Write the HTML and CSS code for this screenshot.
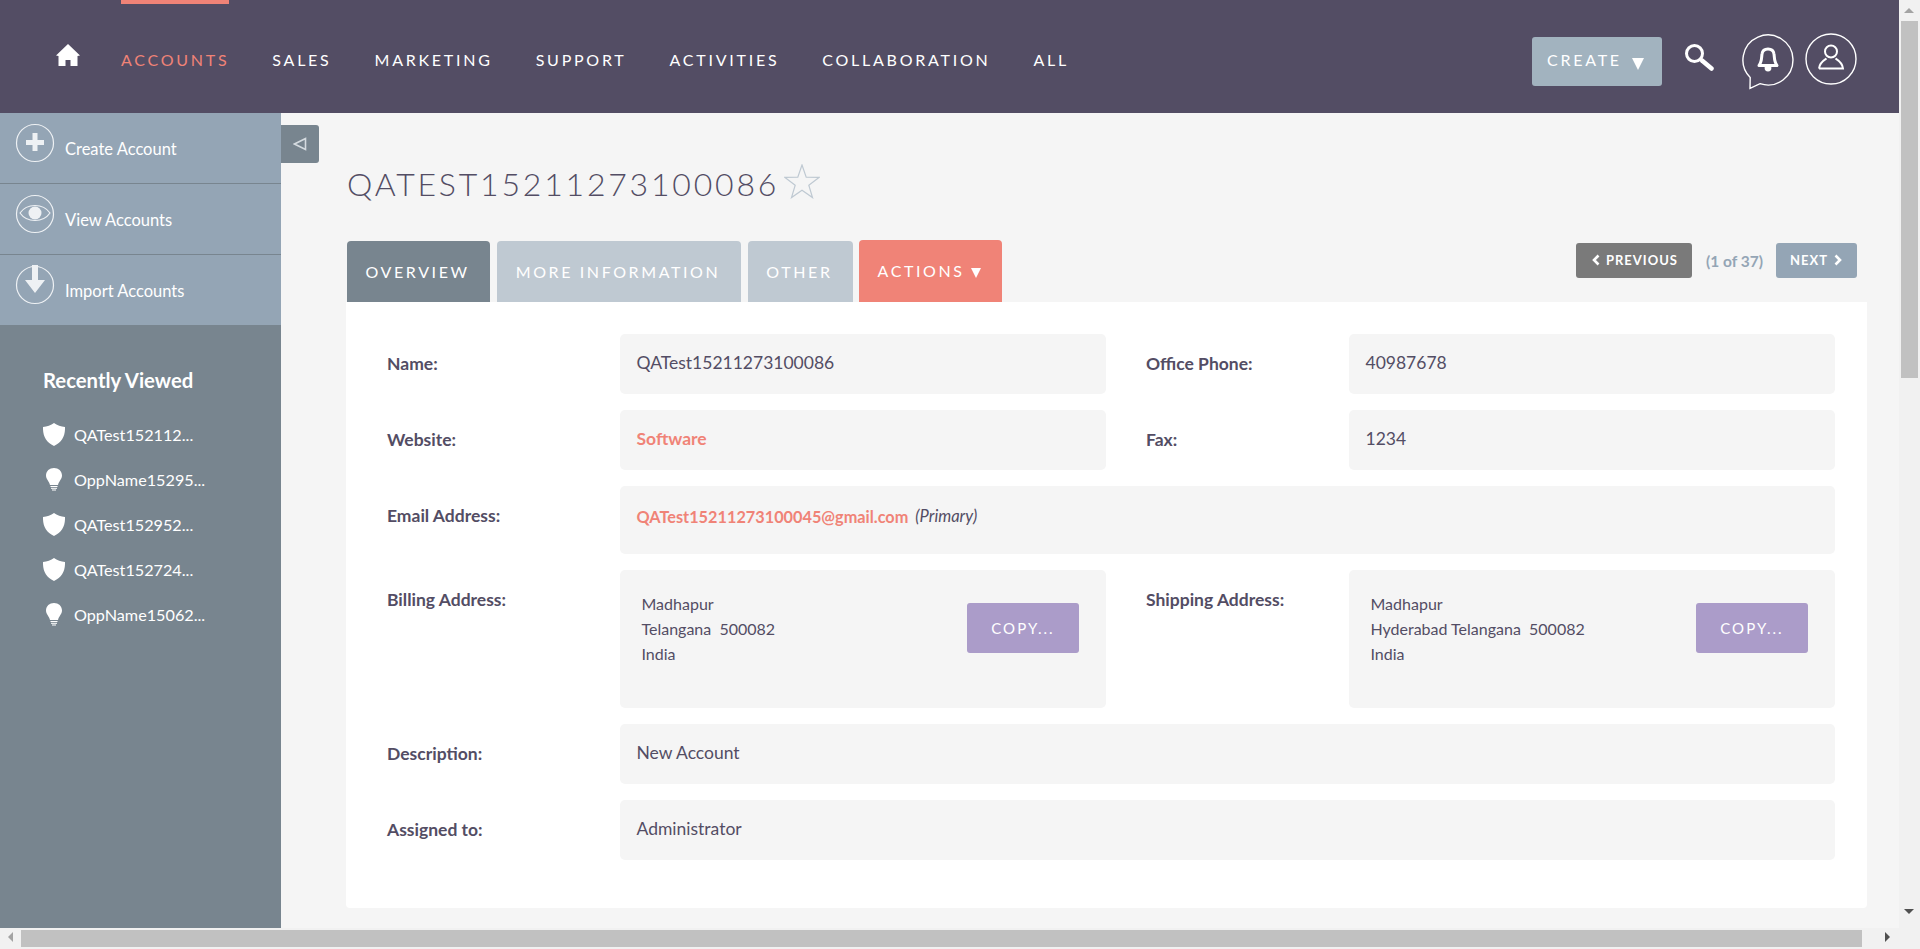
FILE: index.html

```html
<!DOCTYPE html>
<html>

<head>
    <meta charset="utf-8">
    <title>QATest15211273100086</title>
    <link rel="stylesheet" href="styles.css">
</head>

<body>
    <div class="window">
        <div class="page">
            <header class="navbar">
                <a class="nav-home" href="#">
                    <svg width="24" height="23" viewBox="0 0 24 23"><path d="M12 0 L24 11.5 L21.5 12 L21.5 22 L14.5 22 L14.5 16 L9.5 16 L9.5 22 L2.5 22 L2.5 12 L0 11.5 Z" fill="#fff"/></svg>
                </a>
                <nav class="nav-menu">
                    <a class="nav-item active" href="#">ACCOUNTS</a>
                    <a class="nav-item" href="#">SALES</a>
                    <a class="nav-item" href="#">MARKETING</a>
                    <a class="nav-item" href="#">SUPPORT</a>
                    <a class="nav-item" href="#">ACTIVITIES</a>
                    <a class="nav-item" href="#">COLLABORATION</a>
                    <a class="nav-item" href="#">ALL</a>
                </nav>
                <div class="nav-tools">
                    <button class="create-btn">CREATE<span class="create-caret"></span></button>
                    <svg class="search-icon" width="30" height="30" viewBox="0 0 30 30">
                        <circle cx="10.5" cy="10.5" r="8" fill="none" stroke="#fff" stroke-width="3"/>
                        <path d="M18 17.5 L27.5 25.5" stroke="#fff" stroke-width="4.5" stroke-linecap="round"/>
                    </svg>
                    <svg class="bell-icon" width="54" height="62" viewBox="0 0 54 62">
                        <path d="M19 50.7 A25 25 0 1 0 9.2 44.6 L9 55.5 Z" fill="none" stroke="#fff" stroke-width="1.4"/>
                        <path d="M18 32.5 C21 29 20.5 24 21 21 C21.5 17.5 24 16 27 16 C30 16 32.5 17.5 33 21 C33.5 24 33 29 36 32.5 Z" fill="none" stroke="#fff" stroke-width="3" stroke-linejoin="round"/>
                        <circle cx="27" cy="35" r="3.4" fill="#fff"/>
                    </svg>
                    <svg class="user-icon" width="52" height="52" viewBox="0 0 52 52">
                        <circle cx="26" cy="26" r="25" fill="none" stroke="#fff" stroke-width="1.4"/>
                        <circle cx="26" cy="18.5" r="6" fill="none" stroke="#fff" stroke-width="2"/>
                        <path d="M14 35.5 H38 C37.5 30 33.5 27.5 30.5 25.5 M14 35.5 C14.5 30 18.5 27.5 21.5 25.5" fill="none" stroke="#fff" stroke-width="2"/>
                    </svg>
                </div>
            </header>

            <div class="content-wrap">
                <aside class="sidebar">
                    <ul class="action-list">
                        <li class="action-item">
                            <svg class="action-icon" width="40" height="40" viewBox="0 0 40 40">
                                <circle cx="20" cy="20" r="18.5" fill="none" stroke="#eef1f4" stroke-width="1.2"/>
                                <path d="M20 10 V28 M11 19.5 H29" stroke="#eef1f4" stroke-width="5"/>
                            </svg>
                            <span>Create Account</span>
                        </li>
                        <li class="action-item">
                            <svg class="action-icon" width="40" height="40" viewBox="0 0 40 40">
                                <circle cx="20" cy="20" r="18.5" fill="none" stroke="#eef1f4" stroke-width="1.2"/>
                                <path d="M5 19 C12 9 28 9 35 19 C28 29 12 29 5 19 Z" fill="none" stroke="#eef1f4" stroke-width="1.2"/>
                                <circle cx="20" cy="19" r="6.5" fill="#eef1f4"/>
                            </svg>
                            <span>View Accounts</span>
                        </li>
                        <li class="action-item">
                            <svg class="action-icon" width="40" height="40" viewBox="0 0 40 40">
                                <circle cx="20" cy="20" r="18.5" fill="none" stroke="#eef1f4" stroke-width="1.2"/>
                                <path d="M17 0 H23 V15 H30 L20 28 L10 15 H17 Z" fill="#eef1f4"/>
                            </svg>
                            <span>Import Accounts</span>
                        </li>
                    </ul>
                    <div class="recent">
                        <h2 class="recent-title">Recently Viewed</h2>
                        <ul class="recent-list">
                            <li class="recent-item">
                                <span class="recent-icon"><svg width="22" height="23" viewBox="0 0 22 23"><path d="M11 0 C14 2.5 18 3.5 22 4 C22.3 13 19 19 11 23 C3 19 -0.3 13 0 4 C4 3.5 8 2.5 11 0 Z" fill="#fff"/></svg></span>
                                QATest152112...
                            </li>
                            <li class="recent-item">
                                <span class="recent-icon"><svg width="16" height="23" viewBox="0 0 16 23"><path d="M8 0 C12.5 0 16 3 16 7.5 C16 11 13 13 12 17 H4 C3 13 0 11 0 7.5 C0 3 3.5 0 8 0 Z" fill="#fff"/><path d="M4.5 18.5 H11.5 M5 20.3 H11 M6 22 H10" stroke="#fff" stroke-width="1"/></svg></span>
                                OppName15295...
                            </li>
                            <li class="recent-item">
                                <span class="recent-icon"><svg width="22" height="23" viewBox="0 0 22 23"><path d="M11 0 C14 2.5 18 3.5 22 4 C22.3 13 19 19 11 23 C3 19 -0.3 13 0 4 C4 3.5 8 2.5 11 0 Z" fill="#fff"/></svg></span>
                                QATest152952...
                            </li>
                            <li class="recent-item">
                                <span class="recent-icon"><svg width="22" height="23" viewBox="0 0 22 23"><path d="M11 0 C14 2.5 18 3.5 22 4 C22.3 13 19 19 11 23 C3 19 -0.3 13 0 4 C4 3.5 8 2.5 11 0 Z" fill="#fff"/></svg></span>
                                QATest152724...
                            </li>
                            <li class="recent-item">
                                <span class="recent-icon"><svg width="16" height="23" viewBox="0 0 16 23"><path d="M8 0 C12.5 0 16 3 16 7.5 C16 11 13 13 12 17 H4 C3 13 0 11 0 7.5 C0 3 3.5 0 8 0 Z" fill="#fff"/><path d="M4.5 18.5 H11.5 M5 20.3 H11 M6 22 H10" stroke="#fff" stroke-width="1"/></svg></span>
                                OppName15062...
                            </li>
                        </ul>
                    </div>
                </aside>

                <main class="main">
                    <a class="side-toggle" href="#">
                        <svg width="14" height="14" viewBox="0 0 14 14"><path d="M12.5 1.5 V12.5 L1.5 7 Z" fill="none" stroke="#d5dbe0" stroke-width="1.6"/></svg>
                    </a>

                    <div class="title-row">
                        <h1 class="page-title">QATEST15211273100086</h1>
                        <svg class="fav-star" width="36" height="35" viewBox="0 0 36 35"><path d="M18 1 L22.2 13.2 L35 13.4 L24.8 21.2 L28.5 33.6 L18 26.2 L7.5 33.6 L11.2 21.2 L1 13.4 L13.8 13.2 Z" fill="none" stroke="#bfc9d2" stroke-width="1.2"/></svg>
                    </div>

                    <div class="tab-row">
                        <a class="tab tab-active" href="#">OVERVIEW</a>
                        <a class="tab" href="#">MORE INFORMATION</a>
                        <a class="tab" href="#">OTHER</a>
                        <a class="tab tab-actions" href="#">ACTIONS <span class="tab-caret"></span></a>
                        <div class="pager">
                            <a class="pager-btn pager-prev" href="#">
                                <svg width="10" height="12" viewBox="0 0 10 12"><path d="M7.5 1.5 L3 6 L7.5 10.5" fill="none" stroke="#fff" stroke-width="2.6"/></svg>
                                PREVIOUS
                            </a>
                            <span class="pager-count">(1 of 37)</span>
                            <a class="pager-btn pager-next" href="#">
                                NEXT
                                <svg width="10" height="12" viewBox="0 0 10 12"><path d="M2.5 1.5 L7 6 L2.5 10.5" fill="none" stroke="#fff" stroke-width="2.6"/></svg>
                            </a>
                        </div>
                    </div>

                    <section class="panel">
                        <div class="detail-grid">
                            <div class="label">Name:</div>
                            <div class="field">QATest15211273100086</div>
                            <div class="label label-right">Office Phone:</div>
                            <div class="field">40987678</div>

                            <div class="label">Website:</div>
                            <div class="field"><a class="link" href="#">Software</a></div>
                            <div class="label label-right">Fax:</div>
                            <div class="field">1234</div>

                            <div class="label">Email Address:</div>
                            <div class="field field-wide field-email"><a class="link email-link" href="#">QATest15211273100045@gmail.com</a> <em class="email-note">(Primary)</em></div>

                            <div class="label">Billing Address:</div>
                            <div class="field field-address">
                                <div class="address">Madhapur<br>Telangana&nbsp; 500082<br>India</div>
                                <button class="copy-btn">COPY...</button>
                            </div>
                            <div class="label label-right">Shipping Address:</div>
                            <div class="field field-address">
                                <div class="address">Madhapur<br>Hyderabad Telangana&nbsp; 500082<br>India</div>
                                <button class="copy-btn">COPY...</button>
                            </div>

                            <div class="label">Description:</div>
                            <div class="field field-wide">New Account</div>

                            <div class="label">Assigned to:</div>
                            <div class="field field-wide">Administrator</div>
                        </div>
                    </section>
                </main>
            </div>
        </div>

        <div class="vbar">
            <span class="arrow arrow-up"></span>
            <div class="vbar-thumb"></div>
            <span class="arrow arrow-down"></span>
        </div>
        <div class="hbar">
            <span class="arrow arrow-left"></span>
            <div class="hbar-thumb"></div>
            <span class="arrow arrow-right"></span>
        </div>
        <div class="corner"></div>
    </div>
</body>

</html>
```

FILE: styles.css

```css
* {
    box-sizing: border-box;
}

html, body {
    height: 100%;
    margin: 0;
    overflow: hidden;
}

body {
    background: #f5f5f5;
    color: #534d64;
    font-family: "Lato", "Open Sans", sans-serif;
    font-size: 17.5px;
}

a {
    text-decoration: none;
    color: inherit;
}

ul {
    list-style: none;
    margin: 0;
    padding: 0;
}

button {
    border: 0;
    font-family: inherit;
    color: #fff;
}

.window {
    display: grid;
    grid-template-columns: 1fr 21px;
    grid-template-rows: 1fr 21px;
    height: 100%;
}

.page {
    display: flex;
    flex-direction: column;
    min-height: 0;
    overflow: hidden;
}

/* top bar */
.navbar {
    display: flex;
    align-items: stretch;
    flex: none;
    height: 113px;
    background: #534d64;
    color: #fff;
}

.nav-home {
    margin: 44px 0 0 56px;
    width: 65px;
}

.nav-menu {
    display: flex;
    gap: 43px;
}

.nav-item {
    border-top: 4px solid transparent;
    height: 100%;
    line-height: 112px;
    font-size: 16px;
    letter-spacing: 2.75px;
}

.nav-item.active {
    border-top-color: #f08377;
    color: #f08377;
}

.nav-tools {
    display: flex;
    align-items: flex-start;
    margin-left: auto;
    padding-right: 42px;
}

.create-btn {
    display: flex;
    align-items: center;
    width: 130px;
    height: 49px;
    margin-top: 37px;
    padding: 0 18px 5px 15px;
    background: #a2b3bf;
    border-radius: 3px;
    font-size: 16px;
    letter-spacing: 2.75px;
}

.create-caret {
    width: 0;
    height: 0;
    margin: 9px 0 0 auto;
    border-left: 6px solid transparent;
    border-right: 6px solid transparent;
    border-top: 12px solid #fff;
}

.search-icon {
    margin: 43px 0 0 22px;
}

.bell-icon {
    margin: 33px 0 0 27px;
}

.user-icon {
    margin: 33px 0 0 10px;
}

.content-wrap {
    display: flex;
    flex: 1;
    min-height: 0;
}

/* left column */
.sidebar {
    flex: none;
    width: 281px;
    background: #78858f;
    color: #fff;
}

.action-list {
    background: #94a5b5;
}

.action-item {
    display: flex;
    height: 71px;
    padding: 10px 0 0 15px;
    border-bottom: 1px solid #78858f;
    font-size: 16.5px;
}

.action-item:last-child {
    height: 70px;
    border-bottom: 0;
}

.action-item span {
    margin: 17px 0 0 10px;
    line-height: 18px;
}

.recent {
    padding: 41px 0 0 43px;
}

.recent-title {
    margin: 0 0 18px;
    font-size: 20.3px;
    font-weight: 700;
    line-height: 28px;
}

.recent-item {
    display: flex;
    align-items: center;
    height: 45px;
    font-size: 16.2px;
}

.recent-icon {
    display: flex;
    justify-content: center;
    width: 22px;
    margin-right: 9px;
}

/* main column */
.main {
    position: relative;
    flex: 1;
    min-width: 0;
    padding: 0 32px 0 65px;
}

.side-toggle {
    position: absolute;
    left: 0;
    top: 12px;
    display: flex;
    align-items: center;
    justify-content: center;
    width: 38px;
    height: 38px;
    background: #78858f;
    border-radius: 0 3px 3px 0;
}

.title-row {
    display: flex;
    align-items: flex-start;
    height: 127px;
    padding: 49px 0 0 1px;
}

.page-title {
    margin: 0;
    font-size: 32px;
    font-weight: 300;
    line-height: 44px;
    letter-spacing: 2.8px;
}

.fav-star {
    margin: 2px 0 0 5px;
}

.tab-row {
    display: flex;
    align-items: flex-end;
    gap: 7px;
    height: 62px;
    padding-left: 1px;
}

.tab {
    height: 61px;
    padding: 0 20.5px 0 18.5px;
    background: #bfc9d2;
    border-radius: 4px 4px 0 0;
    color: #fff;
    font-size: 16px;
    letter-spacing: 2.6px;
    line-height: 62px;
}

.tab-active {
    background: #78858f;
}

.tab-actions {
    height: 62px;
    margin-left: -1px;
    background: #f08377;
}

.tab-caret {
    display: inline-block;
    width: 0;
    height: 0;
    border-left: 5px solid transparent;
    border-right: 5px solid transparent;
    border-top: 10px solid #fff;
    vertical-align: -1px;
}

.pager {
    display: flex;
    align-self: flex-start;
    align-items: center;
    margin: 3px 10px 0 auto;
}

.pager-btn {
    display: flex;
    align-items: center;
    gap: 5px;
    height: 35px;
    padding: 0 14px 1px;
    border-radius: 3px;
    color: #fff;
    font-size: 13px;
    font-weight: 700;
    letter-spacing: 1px;
}

.pager-prev {
    padding-left: 15px;
    background: #7a7a7a;
}

.pager-next {
    background: #94a5b5;
}

.pager-count {
    margin: 0 13px 0 14px;
    color: #94a5b5;
    font-size: 15.5px;
    font-weight: 700;
}

.panel {
    height: 606px;
    padding: 32px 32px 0 41px;
    background: #fff;
    border-radius: 0 0 4px 4px;
}

.detail-grid {
    display: grid;
    grid-template-columns: 233px 486px 40px 203px 486px;
    grid-template-rows: 60px 60px 68px 138px 60px 60px;
    row-gap: 16px;
}

.label {
    padding-top: 19px;
    font-weight: 700;
    line-height: 22px;
}

.label-right {
    grid-column: 4;
}

.field {
    display: flex;
    align-items: center;
    padding: 0 16.5px 3px;
    background: #f5f5f5;
    border-radius: 5px;
}

.field-wide {
    grid-column: 2 / 6;
}

.link {
    color: #f08377;
    font-weight: 700;
}

.field-email {
    padding-bottom: 8px;
}

.email-link {
    font-size: 16.3px;
}

.email-note {
    margin-left: 7px;
    font-size: 16.5px;
}

.field-address {
    align-items: flex-start;
    justify-content: space-between;
    padding: 21px 27px 0 21.5px;
}

.address {
    font-size: 16px;
    line-height: 25px;
}

.copy-btn {
    width: 112px;
    height: 50px;
    margin-top: 12px;
    background: #ab9cc9;
    border-radius: 3px;
    font-size: 15px;
    letter-spacing: 2px;
}

/* browser scrollbars */
.vbar,
.hbar {
    position: relative;
    background: #f1f1f1;
}

.vbar-thumb {
    width: 17px;
    height: 357px;
    margin: 21px 0 0 2px;
    background: #c1c1c1;
}

.hbar {
    padding: 2px 37px 2px 21px;
}

.hbar-thumb {
    height: 17px;
    background: #c1c1c1;
}

.corner {
    background: #f1f1f1;
}

.arrow {
    position: absolute;
    width: 0;
    height: 0;
}

.arrow-up {
    top: 8px;
    left: 5px;
    border-left: 5px solid transparent;
    border-right: 5px solid transparent;
    border-bottom: 5px solid #a3a3a3;
}

.arrow-down {
    top: 909px;
    left: 5px;
    border-left: 5px solid transparent;
    border-right: 5px solid transparent;
    border-top: 5px solid #505050;
}

.arrow-left {
    top: 4px;
    left: 8px;
    border-top: 5px solid transparent;
    border-bottom: 5px solid transparent;
    border-right: 5px solid #a3a3a3;
}

.arrow-right {
    top: 4px;
    right: 9px;
    border-top: 5px solid transparent;
    border-bottom: 5px solid transparent;
    border-left: 5px solid #505050;
}
```
